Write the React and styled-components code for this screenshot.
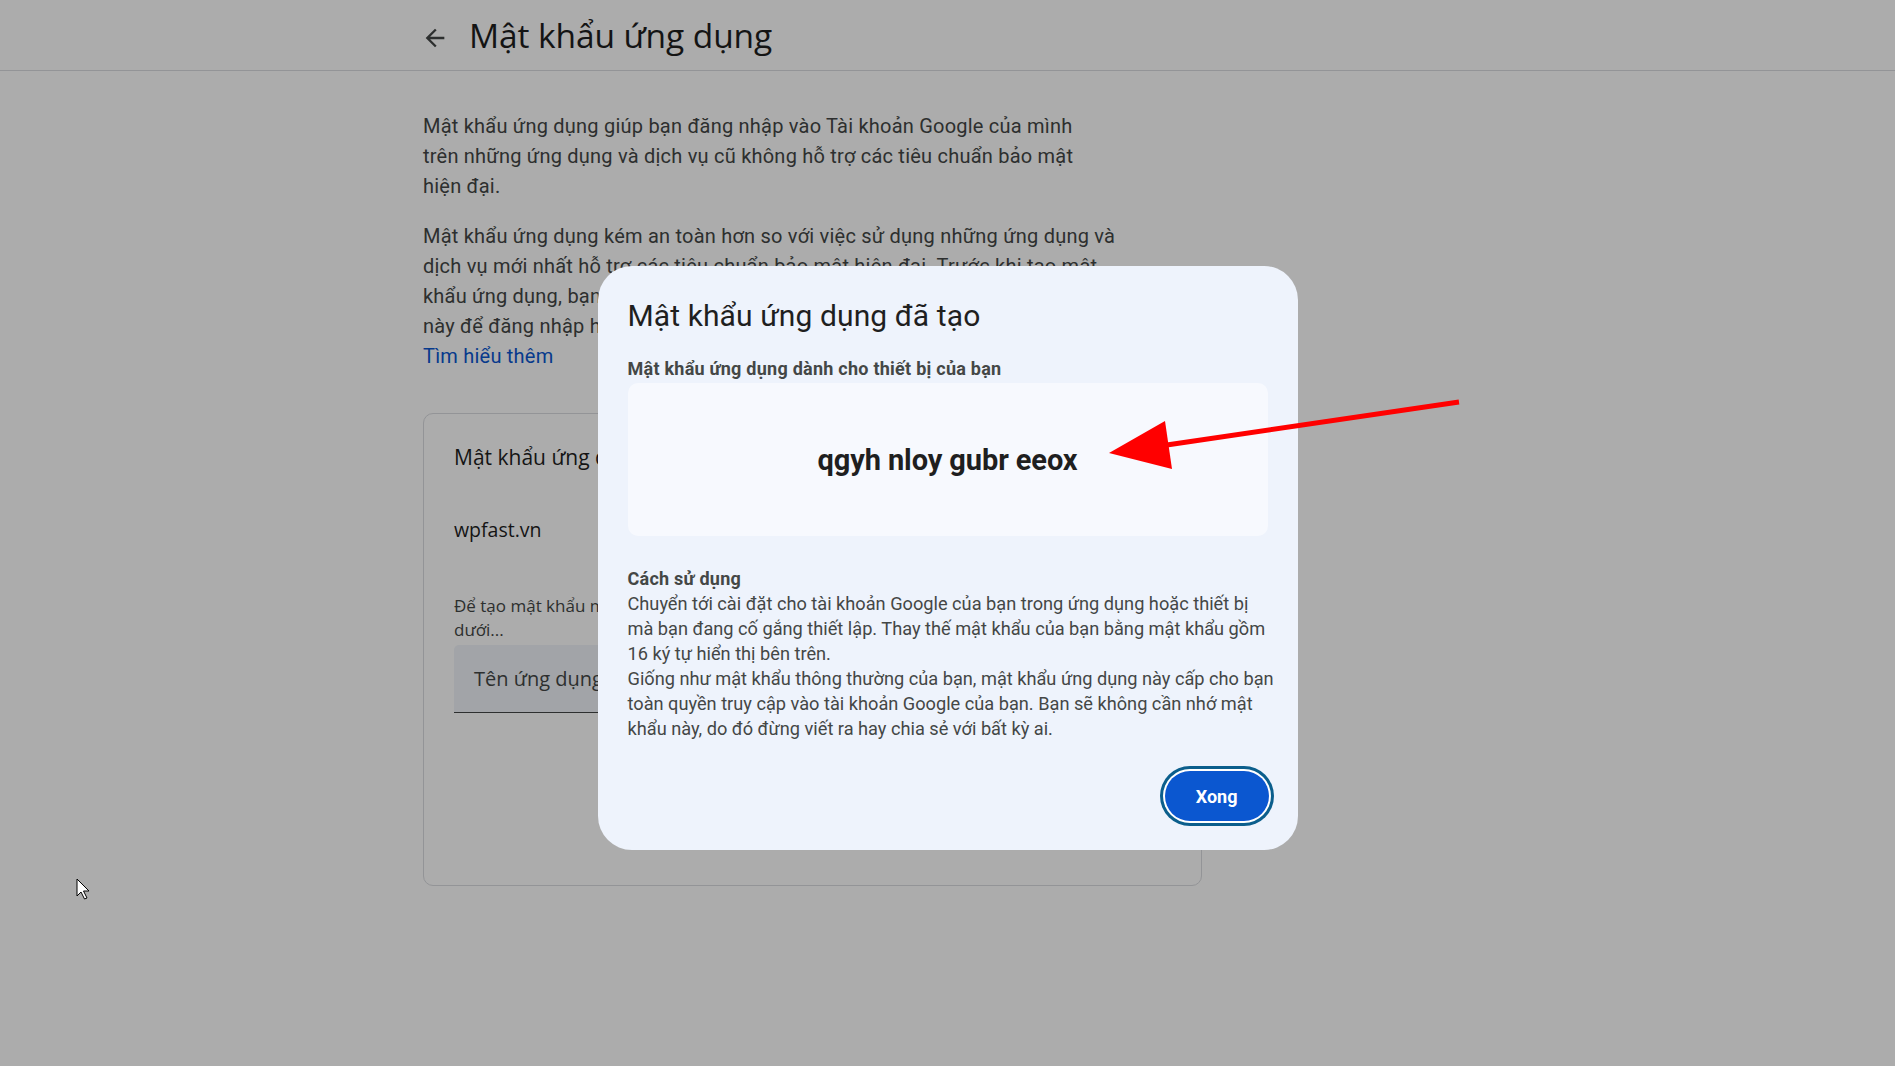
import React from 'react';
import styled, { createGlobalStyle } from 'styled-components';

const GlobalStyle = createGlobalStyle`
  html, body {
    margin: 0;
    padding: 0;
    background: #ffffff;
    font-family: Roboto, "Liberation Sans", sans-serif;
    color: #1f1f1f;
    overflow: hidden;
  }
  * {
    box-sizing: border-box;
  }
`;

const Page = styled.div`
  min-height: 100vh;
  background: #ffffff;
`;

const TopBar = styled.header`
  height: 71px;
  display: flex;
  align-items: center;
  gap: 20px;
  padding-left: 421px;
  border-bottom: 1px solid #dadce0;
`;

const BackButton = styled.button`
  width: 28px;
  height: 28px;
  padding: 0;
  margin-top: 6px;
  border: 0;
  background: none;
  color: #444746;
  display: flex;
  align-items: center;
  justify-content: center;
`;

const PageTitle = styled.h1`
  margin: 0;
  font-family: "Open Sans", sans-serif;
  font-size: 33.5px;
  font-weight: 400;
  color: #1f1f1f;
  letter-spacing: -0.1px;
`;

const Content = styled.main`
  width: 779px;
  margin-left: 423px;
  padding-top: 40px;
`;

const Intro = styled.p`
  margin: 0 0 20px;
  max-width: 700px;
  font-size: 20px;
  letter-spacing: 0.22px;
  line-height: 30px;
  color: #444746;
`;

const LearnMore = styled.a`
  display: block;
  color: #0b57d0;
  text-decoration: none;
`;

const Card = styled.section`
  margin-top: 42px;
  height: 473px;
  border: 1px solid #dadce0;
  border-radius: 10px;
  padding: 30px 30px 0 30px;
  display: flex;
  flex-direction: column;
`;

const CardTitle = styled.h2`
  margin: 0;
  font-family: "Open Sans", sans-serif;
  font-size: 21px;
  line-height: 27px;
  font-weight: 400;
  color: #1f1f1f;
`;

const AppName = styled.div`
  margin-top: 45px;
  font-family: "Open Sans", sans-serif;
  font-size: 19.5px;
  line-height: 27px;
  color: #1f1f1f;
`;

const Hint = styled.p`
  margin: 51px 0 3px;
  font-family: "Open Sans", sans-serif;
  font-size: 17px;
  line-height: 24px;
  color: #444746;
`;

const NameField = styled.div`
  height: 68px;
  background: #f0f4f9;
  border-bottom: 1px solid #444746;
  border-radius: 5px 5px 0 0;
  display: flex;
  align-items: center;
  padding-left: 20px;
  font-family: "Open Sans", sans-serif;
  font-size: 20px;
  color: #444746;
`;

const CreateRow = styled.div`
  display: flex;
  justify-content: flex-end;
  margin-top: 36px;
`;

const TextButton = styled.button`
  border: 0;
  background: none;
  color: #0b57d0;
  font-family: Roboto, sans-serif;
  font-size: 17.5px;
  font-weight: 500;
  padding: 12px 16px;
`;

const Scrim = styled.div`
  position: fixed;
  inset: 0;
  background: rgba(0, 0, 0, 0.325);
  display: flex;
  justify-content: center;
  align-items: flex-start;
  padding-top: 266px;
`;

const Dialog = styled.div`
  width: 700px;
  background: #eef3fc;
  border-radius: 34px;
  padding: 30px 30px 29px;
  display: flex;
  flex-direction: column;
`;

const DialogTitle = styled.h2`
  margin: 0;
  font-size: 30px;
  line-height: 40px;
  font-weight: 400;
  color: #1f1f1f;
  letter-spacing: 0.1px;
`;

const Label = styled.div`
  margin-top: ${(p) => p.$top || 0}px;
  font-size: 18px;
  letter-spacing: 0.25px;
  line-height: 25px;
  font-weight: 700;
  color: #444746;
`;

const PasswordBox = styled.div`
  margin-top: 2px;
  height: 153px;
  border-radius: 10px;
  background: #f7f9fe;
  display: flex;
  align-items: center;
  justify-content: center;
  font-size: 29px;
  font-weight: 700;
  color: #1f1f1f;
  letter-spacing: -0.1px;
`;

const Usage = styled.p`
  margin: 0 -8px 0 0;
  font-size: 18.2px;
  line-height: 25px;
  color: #444746;
`;

const Actions = styled.div`
  display: flex;
  justify-content: flex-end;
  margin-top: 30px;
`;

const FilledButton = styled.button`
  height: 50px;
  padding: 0 31px;
  margin-right: -1px;
  border: 0;
  border-radius: 999px;
  background: #0b57d0;
  color: #ffffff;
  font-family: Roboto, sans-serif;
  font-size: 18px;
  font-weight: 700;
  box-shadow: 0 0 0 2px #ffffff, 0 0 0 5px #0b5e8c;
`;

const Annotation = styled.svg`
  position: fixed;
  inset: 0;
  width: 100%;
  height: 100%;
  pointer-events: none;
`;

function ArrowBack() {
  return (
    <svg width="28" height="28" viewBox="0 0 24 24" fill="currentColor">
      <path d="M20 11H7.83l5.59-5.59L12 4l-8 8 8 8 1.41-1.41L7.83 13H20v-2z" />
    </svg>
  );
}

export default function App() {
  return (
    <>
      <GlobalStyle />
      <Page>
        <TopBar>
          <BackButton aria-label="Quay lại">
            <ArrowBack />
          </BackButton>
          <PageTitle>Mật khẩu ứng dụng</PageTitle>
        </TopBar>
        <Content>
          <Intro>
            Mật khẩu ứng dụng giúp bạn đăng nhập vào Tài khoản Google của mình
            <br />
            trên những ứng dụng và dịch vụ cũ không hỗ trợ các tiêu chuẩn bảo
            mật
            <br />
            hiện đại.
          </Intro>
          <Intro>
            Mật khẩu ứng dụng kém an toàn hơn so với việc sử dụng những ứng
            dụng và dịch vụ mới nhất hỗ trợ các tiêu chuẩn bảo mật hiện đại.
            Trước khi tạo mật khẩu ứng dụng, bạn nên kiểm tra xem ứng dụng của
            bạn có cần mật khẩu này để đăng nhập hay không.
            <LearnMore href="#">Tìm hiểu thêm</LearnMore>
          </Intro>
          <Card>
            <CardTitle>Mật khẩu ứng dụng của bạn</CardTitle>
            <AppName>wpfast.vn</AppName>
            <Hint>
              Để tạo mật khẩu mới dành riêng cho ứng dụng, hãy nhập tên ứng
              dụng bên
              <br />
              dưới...
            </Hint>
            <NameField>Tên ứng dụng</NameField>
            <CreateRow>
              <TextButton>Tạo</TextButton>
            </CreateRow>
          </Card>
        </Content>
      </Page>

      <Scrim>
        <Dialog role="dialog">
          <DialogTitle>Mật khẩu ứng dụng đã tạo</DialogTitle>
          <Label $top={20}>Mật khẩu ứng dụng dành cho thiết bị của bạn</Label>
          <PasswordBox>qgyh nloy gubr eeox</PasswordBox>
          <Label $top={30}>Cách sử dụng</Label>
          <Usage>
            Chuyển tới cài đặt cho tài khoản Google của bạn trong ứng dụng hoặc
            thiết bị mà bạn đang cố gắng thiết lập. Thay thế mật khẩu của bạn
            bằng mật khẩu gồm 16 ký tự hiển thị bên trên.
          </Usage>
          <Usage>
            Giống như mật khẩu thông thường của bạn, mật khẩu ứng dụng này cấp
            cho bạn toàn quyền truy cập vào tài khoản Google của bạn. Bạn sẽ
            không cần nhớ mật khẩu này, do đó đừng viết ra hay chia sẻ với bất
            kỳ ai.
          </Usage>
          <Actions>
            <FilledButton>Xong</FilledButton>
          </Actions>
        </Dialog>
      </Scrim>

      {/* red pointer arrow and the mouse cursor drawn on top */}
      <Annotation>
        <line x1="1459" y1="402" x2="1160" y2="446" stroke="#ff0000" strokeWidth="5" />
        <polygon points="1109,453 1165,421 1172,469" fill="#ff0000" />
        <path
          d="M77 879 L77 896 L81 892 L84.5 899 L87 898 L83.5 891 L89 891 Z"
          fill="#ffffff"
          stroke="#000000"
          strokeWidth="1"
          strokeLinejoin="round"
        />
      </Annotation>
    </>
  );
}
